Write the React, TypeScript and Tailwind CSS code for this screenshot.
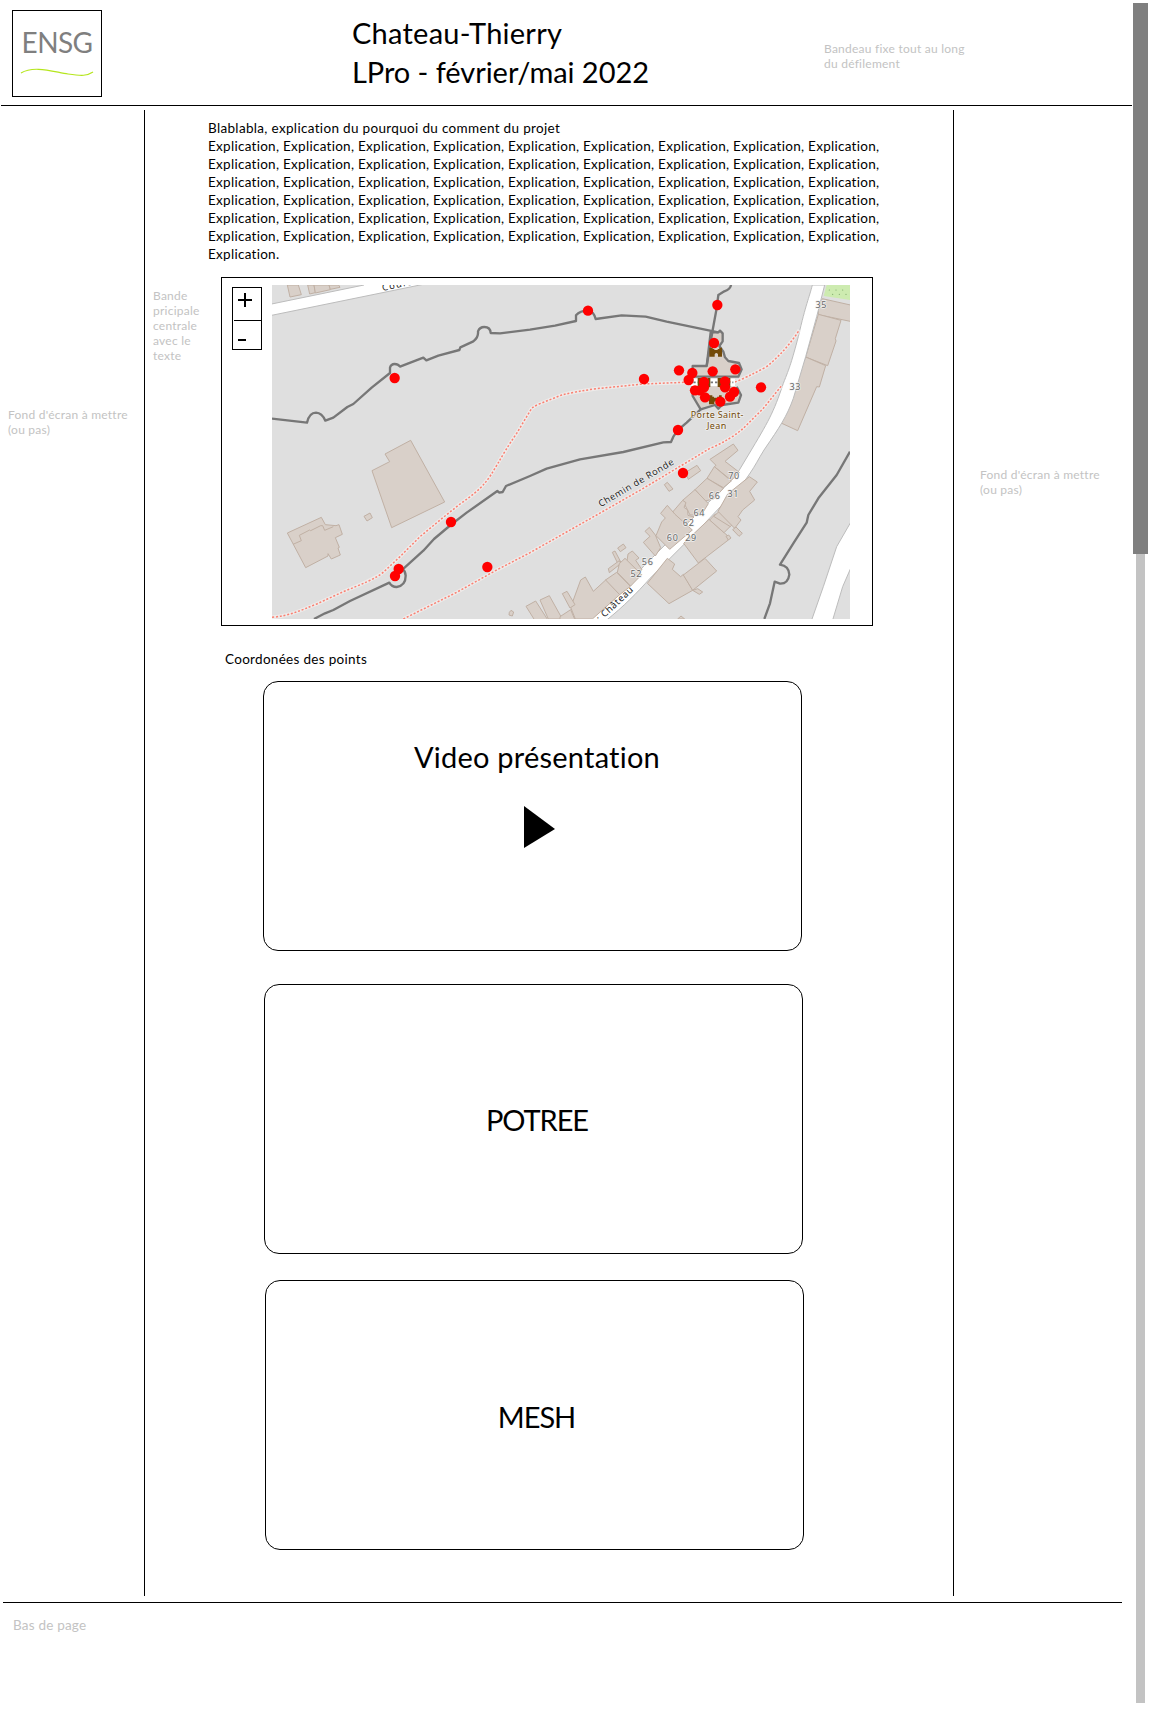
import React from "react";

const building = { fill: "#d9d0c9", stroke: "#c0b0a4", strokeWidth: 3 };
const wall = { fill: "none", stroke: "#777777", strokeWidth: 7, strokeLinejoin: "round" as const };

const northBuildings = [
  "232,45 240,81 274,74 265,45",
  "293,45 299,72 316,68 312,45",
  "312,45 316,69 361,59 357,45",
  "357,45 361,58 390,52 386,45",
];

const westBuildings = [
  "525,72 602,31 704,216 545,293 486,122 539,95",
  "462,259 480,249 487,263 471,273",
  "232,309 334,262 346,284 378,287 387,284 397,313 376,323 388,352 384,354 391,375 364,387 354,371 354,378 287,413",
  "903,541 911,546 907,558 897,555 898,547",
  "948,529 977,513 1020,580 980,580",
];

const eastBuildings = [
  "475,110 487,86 580,107 580,156 475,134",
  "475,133 543,151 526,206 528,213 503,287 437,261",
  "437,261 497,287 478,351 470,350 413,482 361,458",
];

const streetBuildings = [
  "450,118 520,72 534,91 495,124 538,157 514,181 463,140 468,136",
  "463,140 514,183 490,203 441,175",
  "441,175 490,205 462,236 436,243 405,209",
  "405,209 445,251 424,285 390,285 368,241",
  "368,241 378,248 372,262 383,270 384,286 402,291 371,320 338,276",
  "322,256 345,283 397,330 329,388 288,347 305,306 316,294 302,280",
  "255,334 268,322 286,345 302,383 286,408 250,367 270,349",
  "377,157 411,136 422,152 385,178",
  "313,194 322,187 339,207 327,214",
  "173,384 190,372 198,383 181,395",
  "157,397 165,393 187,435 177,438",
  "145,446 178,422 182,431 148,458",
  "204,402 217,393 237,414 227,421 246,449 230,461 200,430",
  "178,431 195,415 245,464 212,498 172,457",
  "135,481 170,457 211,499 179,524",
  "62,480 76,471 100,514 137,480 179,524 97,597 46,597 32,562",
  "7,521 21,514 45,554 30,564",
  "-60,540 -32,527 7,597 -35,597",
  "0,590 32,569 45,600 0,600",
  "371,370 447,298 506,350 505,360 415,429",
  "449,300 466,282 511,319 492,338",
  "461,289 478,274 523,307 511,320",
  "474,274 503,222 568,170 592,186 569,214 584,240 548,270 534,290 543,300 524,325",
  "518,329 528,321 547,340 537,349",
  "262,490 322,415 344,432 337,448 362,470 370,463 398,511 327,551",
  "370,465 435,415 470,453 398,511",
  "398,511 413,506 428,516 418,523",
  "353,597 363,588 374,597",
  "498,349 506,345 513,354 505,360",
];

const towers = [
  [0, 0], [-35, 91], [25, 91], [-1, 143],
];

const markers = [
  [554, 324], [1134, 122], [1302, 327], [1419, 609], [723, 756], [566, 897], [555, 918], [832, 891],
  [1522, 105], [1512, 219], [1407, 301], [1447, 309], [1436, 330], [1508, 304], [1576, 298], [1653, 352],
  [1404, 480], [1482, 336], [1482, 352], [1470, 361], [1455, 361], [1485, 382], [1545, 334], [1545, 352],
  [1572, 366], [1560, 380], [1531, 395],
];

const houseNumbers: [string, number, number][] = [
  ["35", 1833, 115], ["33", 1755, 361], ["70", 1571, 626], ["31", 1569, 682], ["66", 1513, 688],
  ["64", 1467, 737], ["62", 1435, 769], ["60", 1387, 813], ["29", 1442, 813], ["56", 1312, 886], ["52", 1278, 922],
];

function Footpath({ d }: { d: string }) {
  return (
    <g fill="none">
      <path d={d} stroke="#f1eeec" strokeWidth="11" opacity=".8" />
      <path d={d} stroke="#fa8072" strokeWidth="4.5" strokeDasharray="6 5.5" />
    </g>
  );
}

function SiteMap() {
  return (
    <svg className="block h-[334px] w-[578px]" viewBox="186 45 1734 1002" fontFamily="'Noto Sans', sans-serif">
      <rect x="186" y="45" width="1734" height="1002" fill="#dfdfdf" />
      <g {...building}>
        {northBuildings.map((p) => <polygon key={p} points={p} />)}
        <g transform="translate(0 480)">
          {westBuildings.map((p) => <polygon key={p} points={p} />)}
          <path d="M249,343 274,332 268,316 299,300 302,302 332,287 338,287 344,301 370,290" fill="none" />
        </g>
        <g transform="translate(1350 0)">
          {eastBuildings.map((p) => <polygon key={p} points={p} />)}
        </g>
      </g>

      <g fill="#fff" stroke="#bcbcbc" strokeWidth="3">
        <path d="M180,103 462,45 V30 H700 V30 L630,45 180,137Z" />
        <path d="M1805,1050 1840,950 1880,830 1925,752 V888 L1898,950 1868,1050Z" />
        <path d="M1807,45 C1797,85 1788,100 1765,200 C1745,275 1740,290 1720,340 C1690,430 1675,455 1615,555 L1585,605 C1560,640 1500,692 1450,740 L1300,890 C1240,955 1180,1010 1135,1050 L1190,1050 C1240,1010 1280,970 1320,925 L1470,775 L1550,690 C1600,645 1625,605 1650,560 L1662,540 C1710,470 1730,440 1750,385 L1787,260 L1820,140 L1844,45Z" />
      </g>
      <path d="M1850,45 1841,78 1920,90 V45Z" fill="#cdebb0" />
      <g fill="#7ea86a">
        {[1860, 1880, 1900].map((x) => (
          <React.Fragment key={x}>
            <circle cx={x - 2} cy="60" r="1.8" />
            <circle cx={x + 8} cy="73" r="1.8" />
          </React.Fragment>
        ))}
      </g>
      <g {...building}>
        <g transform="translate(1050 450)">
          {streetBuildings.map((p) => <polygon key={p} points={p} />)}
        </g>
      </g>

      <Footpath d="M186,1042 C240,1037 270,1022 320,1002 L400,965 C450,945 500,925 522,905 L570,860 630,800 700,742 750,702 Q800,668 822,642 C850,612 870,562 920,490 L965,415 Q975,407 990,401 L1055,375 Q1100,364 1160,356 L1300,342 1420,337 1440,337" />
      <Footpath d="M1565,340 Q1610,323 1670,290 Q1730,240 1768,180" />
      <Footpath d="M580,1047 740,967 860,900 960,848 1160,735 1300,655 1500,535 Q1560,510 1600,475 L1660,415 1715,347" />

      <g {...wall} fill="#d9d0c9">
        <path d="M1502,187 L1525,187 1530,182 1538,190 1538,214 1528,228 1540,245 1545,262 1555,273 1587,279 1595,298 1585,320 1448,320 1448,288 1490,288Z" />
        <path d="M1448,348 V378 L1472,418 1515,405 1525,416 1536,405 1585,398 1593,375 1580,350" />
      </g>
      <path d="M1443,337 H1575" stroke="#fff" strokeWidth="22" />
      <path d="M1450,337 H1570" stroke="#777" strokeWidth="5" strokeDasharray="7 6" />
      <g {...wall}>
        <path d="M186,446 291,458 Q298,428 318,428 Q336,429 346,452 L370,443 412,411 430,402 485,353 540,309 V293 Q543,282 554,282 Q564,282 570,290 L640,263 649,271 685,257 748,240 751,232 790,214 Q806,202 804,184 Q809,171 823,171 Q841,171 842,189 L870,190 960,179 1035,167 1098,153 V136 Q1110,122 1134,122 Q1152,125 1157,147 L1235,136 1307,140 1370,155 1525,187" />
        <path d="M312,1047 345,1030 370,1020 420,993 538,938 Q545,951 560,951 Q587,946 587,917 Q586,903 578,898 L640,842 672,807 722,765 770,728 862,663 868,668 878,666 888,648 960,618 1010,596 1110,568 1240,546 1360,517 1383,516 1390,500 1404,480 1430,458 1472,418" />
        <path d="M1563,45 Q1562,57 1543,64 L1525,75 1520,115 1508,180 1490,288" />
        <path d="M1920,545 1880,615 1825,685 1795,735 1790,758 1750,820 1710,884 Q1737,888 1738,914 Q1734,942 1710,941 L1694,935 1680,1000 1663,1047" />
      </g>

      <g fill="#734a08">
        {towers.map(([x, y]) => (
          <path key={`${x}-${y}`} transform={`translate(${x} ${y})`} d="M1498,233h10v4h5v3h10v-3h5v-4h8v27h-12v-7q-5,-8-10,0v7h-16Z" />
        ))}
      </g>

      <g fontSize="27" textAnchor="middle" stroke="#f2f2f2" strokeWidth="4" paintOrder="stroke" fill="#666666">
        {houseNumbers.map(([n, x, y]) => <text key={n} x={x} y={y} textLength="33">{n}</text>)}
      </g>
      <g fontSize="28" fill="#222">
        <g stroke="#eee" strokeWidth="4" paintOrder="stroke">
          <text transform="translate(1172 712) rotate(-30.5)" textLength="257">Chemin de Ronde</text>
        </g>
        <text transform="translate(518 63) rotate(-12)" textLength="92">Cours</text>
        <text transform="translate(1170 1056) rotate(-43)" textLength="138">: Château</text>
      </g>
      <g fontSize="27" fill="#734a08" textAnchor="middle" stroke="#eee" strokeWidth="5" paintOrder="stroke">
        <text x="1521" y="444" textLength="158">Porte Saint-</text>
        <text x="1520" y="477" textLength="58">Jean</text>
      </g>

      <g fill="#f00">
        {markers.map(([x, y]) => <circle key={`${x}-${y}`} cx={x} cy={y} r="15.5" />)}
      </g>
    </svg>
  );
}

const row = "Explication, ".repeat(9);

function Note({ lines, className = "" }: { lines: string[]; className?: string }) {
  return (
    <div className={`text-xs leading-[15px] tracking-[0.24px] whitespace-nowrap text-[#c3c3c3] ${className}`}>
      {lines.map((line) => <p key={line}>{line}</p>)}
    </div>
  );
}

function Panel({ children, className }: { children: React.ReactNode; className: string }) {
  return (
    <section className={`flex h-[270px] w-[539px] flex-col items-center rounded-[15px] border border-black text-[29px] leading-[39px] ${className}`}>
      {children}
    </section>
  );
}

export default function App() {
  return (
    <div className="flex h-[1711px] w-[1152px] overflow-hidden bg-white font-['Lato',sans-serif] text-black">
      <div className="flex w-[1133px] shrink-0 flex-col">
        <header className="ml-px flex h-[106px] w-[1131px] border-b border-black">
          <div className="mt-[10px] ml-[11px] flex h-[87px] w-[90px] shrink-0 flex-col items-center border border-black">
            <span className="mt-[12px] text-[28px] leading-[39px] tracking-[-0.6px] text-[#7f7f7f]">ENSG</span>
            <svg className="mt-[6px] h-[9px] w-[74px]" viewBox="0 0 74 9" fill="none" stroke="#b5e61d" strokeWidth="1.2">
              <path d="M1 5C14-3 34 4 48 6S67 8 73 4" />
            </svg>
          </div>
          <h1 className="mt-[13px] ml-[250px] w-[472px] text-[29px] leading-[39px] whitespace-nowrap">
            <span className="block tracking-[0.25px]">Chateau-Thierry</span>
            <span className="block tracking-[-0.05px]">LPro - février/mai 2022</span>
          </h1>
          <Note className="mt-[41px]" lines={["Bandeau fixe tout au long", "du défilement"]} />
        </header>

        <div className="mt-1 flex h-[1486px]">
          <aside className="w-[144px] shrink-0 pt-[297px] pl-2">
            <Note lines={["Fond d'écran à mettre", "(ou pas)"]} />
          </aside>
          <main className="flex w-[810px] shrink-0 border-x border-black">
            <aside className="w-[63px] shrink-0 pt-[178px] pl-2">
              <Note className="tracking-[0.4px]" lines={["Bande", "pricipale", "centrale", "avec le", "texte"]} />
            </aside>
            <div className="flex w-[700px] shrink-0 flex-col">
              <div className="mt-[9px] text-[13.5px] leading-[18px] tracking-[0.28px] whitespace-nowrap">
                <p className="tracking-[0.33px]">Blablabla, explication du pourquoi du comment du projet</p>
                {[1, 2, 3, 4, 5, 6].map((n) => <p key={n}>{row}</p>)}
                <p>Explication.</p>
              </div>
              <div className="mt-[14px] ml-[13px] flex h-[349px] w-[652px] border border-black">
                <div className="mt-[9px] ml-[10px] flex h-[63px] w-[30px] shrink-0 flex-col border border-black pl-px">
                  <button className="h-[33px] w-full shrink-0 border-b border-black pl-1 text-left">
                    <svg className="h-[14px] w-[14px] -translate-y-1" viewBox="0 0 14 14" stroke="#000" strokeWidth="2"><path d="M0 7h14M7 0v14" /></svg>
                  </button>
                  <button className="w-full pt-[18px] pl-1">
                    <svg className="h-[2px] w-[8px]" viewBox="0 0 8 2"><path d="M0 0h8v2H0z" /></svg>
                  </button>
                </div>
                <div className="mt-[7px] ml-[10px]"><SiteMap /></div>
              </div>
              <p className="mt-[24px] ml-[17px] text-[13.5px] leading-[18px] tracking-[0.3px]">Coordonées des points</p>
              <Panel className="mt-[13px] ml-[55px]">
                <span className="mt-[55px] ml-[9px] tracking-[0.22px]">Video présentation</span>
                <svg className="mt-[30px] ml-[14px] h-[43px] w-[31px]" viewBox="0 0 31 43"><path d="M0 0 31 23 0 42z" /></svg>
              </Panel>
              <Panel className="mt-[33px] ml-[56px]"><span className="mt-[115px] ml-[7px] tracking-[-1.1px]">POTREE</span></Panel>
              <Panel className="mt-[26px] ml-[57px]"><span className="mt-[116px] ml-[4px] tracking-[-1px]">MESH</span></Panel>
            </div>
          </main>
          <aside className="pt-[357px] pl-[26px]">
            <Note lines={["Fond d'écran à mettre", "(ou pas)"]} />
          </aside>
        </div>

        <footer className="mt-[6px] ml-[3px] w-[1119px] border-t border-black pt-[13px] pl-[10px] text-[13.5px] leading-[18px] tracking-[0.2px] text-[#c3c3c3]">
          Bas de page
        </footer>
      </div>
      <div className="mt-[3px] flex w-[15px] flex-col items-center">
        <div className="h-[551px] w-full bg-[#7f7f7f]" />
        <div className="h-[1149px] w-[9px] bg-[#c3c3c3]" />
      </div>
    </div>
  );
}
